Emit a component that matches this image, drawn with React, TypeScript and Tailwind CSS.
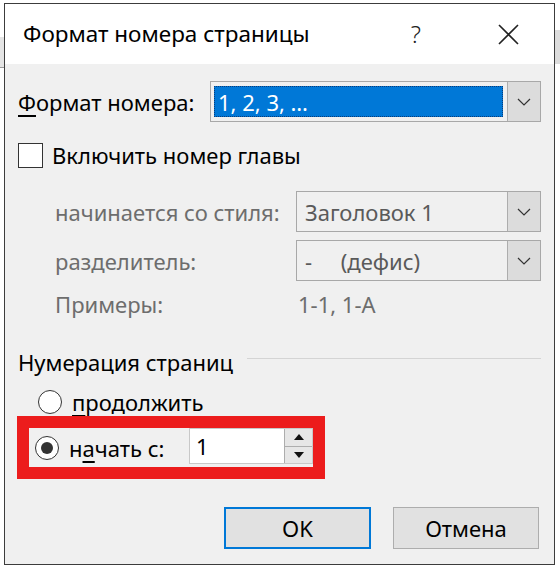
import React from "react";

const Chevron = () => (
  <svg width="14" height="8" viewBox="0 0 14 8" fill="none">
    <path d="M1 1 L7 7 L13 1" stroke="#333" strokeWidth="1.2" />
  </svg>
);

const Dropdown = ({
  width,
  children,
  className = "",
}: {
  width: string;
  children: React.ReactNode;
  className?: string;
}) => (
  <div className={`flex h-[41px] border border-[#a8a8a8] bg-[#f0f0f0] ${width} ${className}`}>
    <div className="flex-1 flex items-center min-w-0">{children}</div>
    <div className="w-[33px] h-full bg-[#dcdcdc] border-l border-[#adadad] flex items-center justify-center">
      <Chevron />
    </div>
  </div>
);

const Radio = ({ checked }: { checked?: boolean }) => (
  <div className="w-[24px] h-[24px] rounded-full border-[1.5px] border-[#333] bg-white flex items-center justify-center shrink-0">
    {checked && <div className="w-[12px] h-[12px] rounded-full bg-[#333]" />}
  </div>
);

export default function App() {
  return (
    <div className="w-[560px] h-[570px] bg-white relative overflow-hidden font-['Noto_Sans',sans-serif] text-[#1b1b1b]">
      <div className="absolute left-0 top-[37px] w-[4px] h-[31px] bg-[#e4e4e4] border-b border-[#9a9a9a]" />
      <div className="absolute right-0 top-[30px] w-[5px] h-[34px] bg-[#dcdcdc]" />
      <div className="ml-[4px] mt-[3px] w-[551px] h-[562px] border border-[#3c3c3c] bg-[#f0f0f0] flex flex-col">
        {/* Title bar */}
        <div className="h-[60px] bg-white flex items-center pl-[18px] pr-[35px] shrink-0">
          <div className="text-[22.5px] text-black leading-none">Формат номера страницы</div>
          <div className="ml-auto text-[24px] text-[#222] font-light leading-none">?</div>
          <div className="ml-[77px]">
            <svg width="21" height="21" viewBox="0 0 21 21">
              <path d="M1 1 L20 20 M20 1 L1 20" stroke="#222" strokeWidth="1.6" />
            </svg>
          </div>
        </div>

        {/* Body */}
        <div className="flex-1 flex flex-col px-[13px] pt-[17px] text-[22px] leading-[28px]">
          <div className="flex items-center">
            <div className="w-[192px] text-black">
              <span className="underline underline-offset-[4px]">Ф</span>ормат номера:
            </div>
            <Dropdown width="w-[331px]">
              <div className="ml-[3px] h-[31px] w-[289px] bg-[#0078d7] outline outline-1 outline-dotted outline-[#0a3c7a] outline-offset-[-1px] flex items-center pl-[4px] text-white">
                1, 2, 3, …
              </div>
            </Dropdown>
          </div>

          <div className="flex items-center gap-[9px] mt-[19px]">
            <div className="w-[25px] h-[25px] border-[1.5px] border-[#333] bg-white shrink-0" />
            <div className="text-black">Включить номер главы</div>
          </div>

          <div className="flex items-center mt-[22px] ml-[37px] text-[#6d6d6d]">
            <div className="w-[241px]">начинается со стиля:</div>
            <Dropdown width="w-[245px]">
              <span className="pl-[8px] text-[#5a5a5a]">Заголовок 1</span>
            </Dropdown>
          </div>

          <div className="flex items-center mt-[8px] ml-[37px] text-[#6d6d6d]">
            <div className="w-[241px]">разделитель:</div>
            <Dropdown width="w-[245px]">
              <span className="pl-[8px] text-[#5a5a5a] whitespace-pre">-     (дефис)</span>
            </Dropdown>
          </div>

          <div className="flex items-center h-[28px] mt-[9px] ml-[37px] text-[#6d6d6d]">
            <div className="w-[243px]">Примеры:</div>
            <div>1-1, 1-A</div>
          </div>

          <div className="flex items-center h-[28px] mt-[30px]">
            <div className="text-black">Нумерация страниц</div>
            <div className="flex-1 ml-[14px] mb-[8px] border-t border-[#d4d4d4]" />
          </div>

          <div className="flex items-center h-[28px] mt-[12px] ml-[20px] gap-[10px]">
            <Radio />
            <div className="text-black">
              <span className="underline underline-offset-[4px]">п</span>родолжить
            </div>
          </div>

          <div className="ml-[-1px] w-[308px] h-[63px] border-[12px] border-[#ec1c1c] flex items-center bg-[#f0f0f0]">
            <div className="ml-[6px] flex items-center gap-[10px]">
              <Radio checked />
              <div className="text-black">
                н<span className="underline underline-offset-[4px]">а</span>чать с:
              </div>
            </div>
            <div className="ml-auto self-start h-[36px] w-[124px] bg-white border border-[#c8c8c8] flex">
              <div className="flex-1 flex items-center pl-[6px] text-black">1</div>
              <div className="w-[28px] flex flex-col border-l border-[#adadad]">
                <div className="flex-1 bg-[#e6e6e6] border-b border-[#adadad] flex items-center justify-center">
                  <svg width="10" height="6" viewBox="0 0 10 6">
                    <path d="M0 6 L5 0 L10 6 Z" fill="#111" />
                  </svg>
                </div>
                <div className="flex-1 bg-[#e6e6e6] flex items-center justify-center">
                  <svg width="10" height="6" viewBox="0 0 10 6">
                    <path d="M0 0 L10 0 L5 6 Z" fill="#111" />
                  </svg>
                </div>
              </div>
            </div>
          </div>

          <div className="flex justify-end mt-[28px] mr-[2px] gap-[22px] text-[22px] text-black">
            <div className="w-[147px] h-[42px] border-2 border-[#0078d7] bg-[#e1e1e1] flex items-center justify-center">
              OK
            </div>
            <div className="w-[146px] h-[42px] border border-[#adadad] bg-[#e1e1e1] flex items-center justify-center">
              Отмена
            </div>
          </div>
        </div>
      </div>
    </div>
  );
}
